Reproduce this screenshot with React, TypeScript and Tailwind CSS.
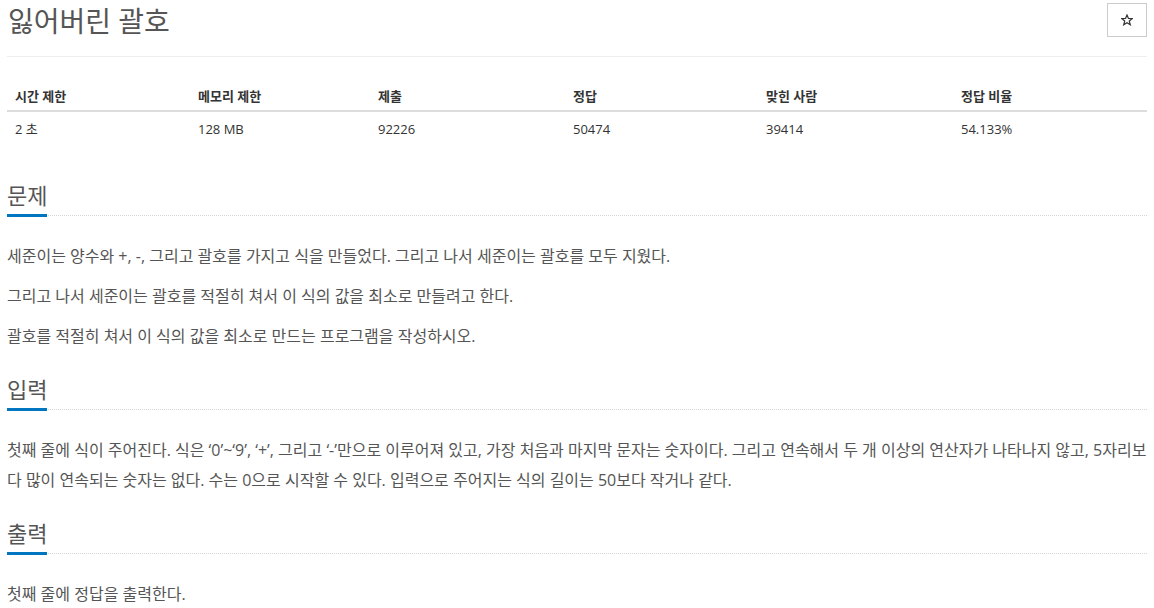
import React from "react";

const font = { fontFamily: '"Open Sans", "Noto Sans CJK KR", sans-serif' };

function Heading({ children }: { children: React.ReactNode }) {
  return (
    <div className="flex border-b border-dotted border-[#d6d6d6]">
      <span className="text-[22px] leading-[28px] text-[#555] pt-[2px] pb-[5px] mb-[-2px] border-b-[3px] border-[#0076c0] whitespace-nowrap">
        {children}
      </span>
    </div>
  );
}

const cols = ["시간 제한", "메모리 제한", "제출", "정답", "맞힌 사람", "정답 비율"];
const vals = ["2 초", "128 MB", "92226", "50474", "39414", "54.133%"];

export default function App() {
  return (
    <div className="w-[1154px] bg-white px-[7px]" style={font}>
      <div className="flex justify-between items-start h-[57px] border-b border-[#eeeeee]">
        <h1 className="text-[28px] leading-[42px] text-[#555] font-normal pl-px">잃어버린 괄호</h1>
        <button className="mt-[3px] w-[40px] h-[34px] border border-[#cccccc] bg-white flex items-center justify-center">
          <svg width="12" height="12" viewBox="0 0 24 24" fill="none" stroke="#333" strokeWidth="2.4" strokeLinejoin="miter">
            <polygon points="12,2 14.9,9 22.5,9.3 16.6,14.1 18.6,21.5 12,17.3 5.4,21.5 7.4,14.1 1.5,9.3 9.1,9" />
          </svg>
        </button>
      </div>

      <div className="mt-[24px] text-[#333]">
        <div className="grid grid-cols-[183px_180px_195px_193px_195px_194px] h-[31px] items-center border-b-2 border-[#dddddd]">
          {cols.map((c) => (
            <div key={c} className="px-2 text-[13px] font-bold leading-[16px]">
              {c}
            </div>
          ))}
        </div>
        <div className="grid grid-cols-[183px_180px_195px_193px_195px_194px] h-[34px] items-center">
          {vals.map((v) => (
            <div key={v} className="px-2 text-[13px] leading-[16px]">
              {v}
            </div>
          ))}
        </div>
      </div>

      <div className="mt-[33px]">
        <Heading>문제</Heading>
        <div className="mt-[25px] flex flex-col gap-[10px] text-[16px] leading-[30px] text-[#555]">
          <p>세준이는 양수와 +, -, 그리고 괄호를 가지고 식을 만들었다. 그리고 나서 세준이는 괄호를 모두 지웠다.</p>
          <p>그리고 나서 세준이는 괄호를 적절히 쳐서 이 식의 값을 최소로 만들려고 한다.</p>
          <p>괄호를 적절히 쳐서 이 식의 값을 최소로 만드는 프로그램을 작성하시오.</p>
        </div>
      </div>

      <div className="mt-[22px]">
        <Heading>입력</Heading>
        <div className="mt-[25px] text-[16px] leading-[30px] text-[#555]">
          <p>
            첫째 줄에 식이 주어진다. 식은 ‘0’~‘9’, ‘+’, 그리고 ‘-’만으로 이루어져 있고, 가장 처음과 마지막 문자는 숫자이다. 그리고 연속해서 두 개 이상의 연산자가 나타나지 않고, 5자리보다 많이 연속되는 숫자는 없다. 수는 0으로 시작할 수 있다. 입력으로 주어지는 식의 길이는 50보다 작거나 같다.
          </p>
        </div>
      </div>

      <div className="mt-[22px]">
        <Heading>출력</Heading>
        <div className="mt-[25px] text-[16px] leading-[30px] text-[#555]">
          <p>첫째 줄에 정답을 출력한다.</p>
        </div>
      </div>
    </div>
  );
}
